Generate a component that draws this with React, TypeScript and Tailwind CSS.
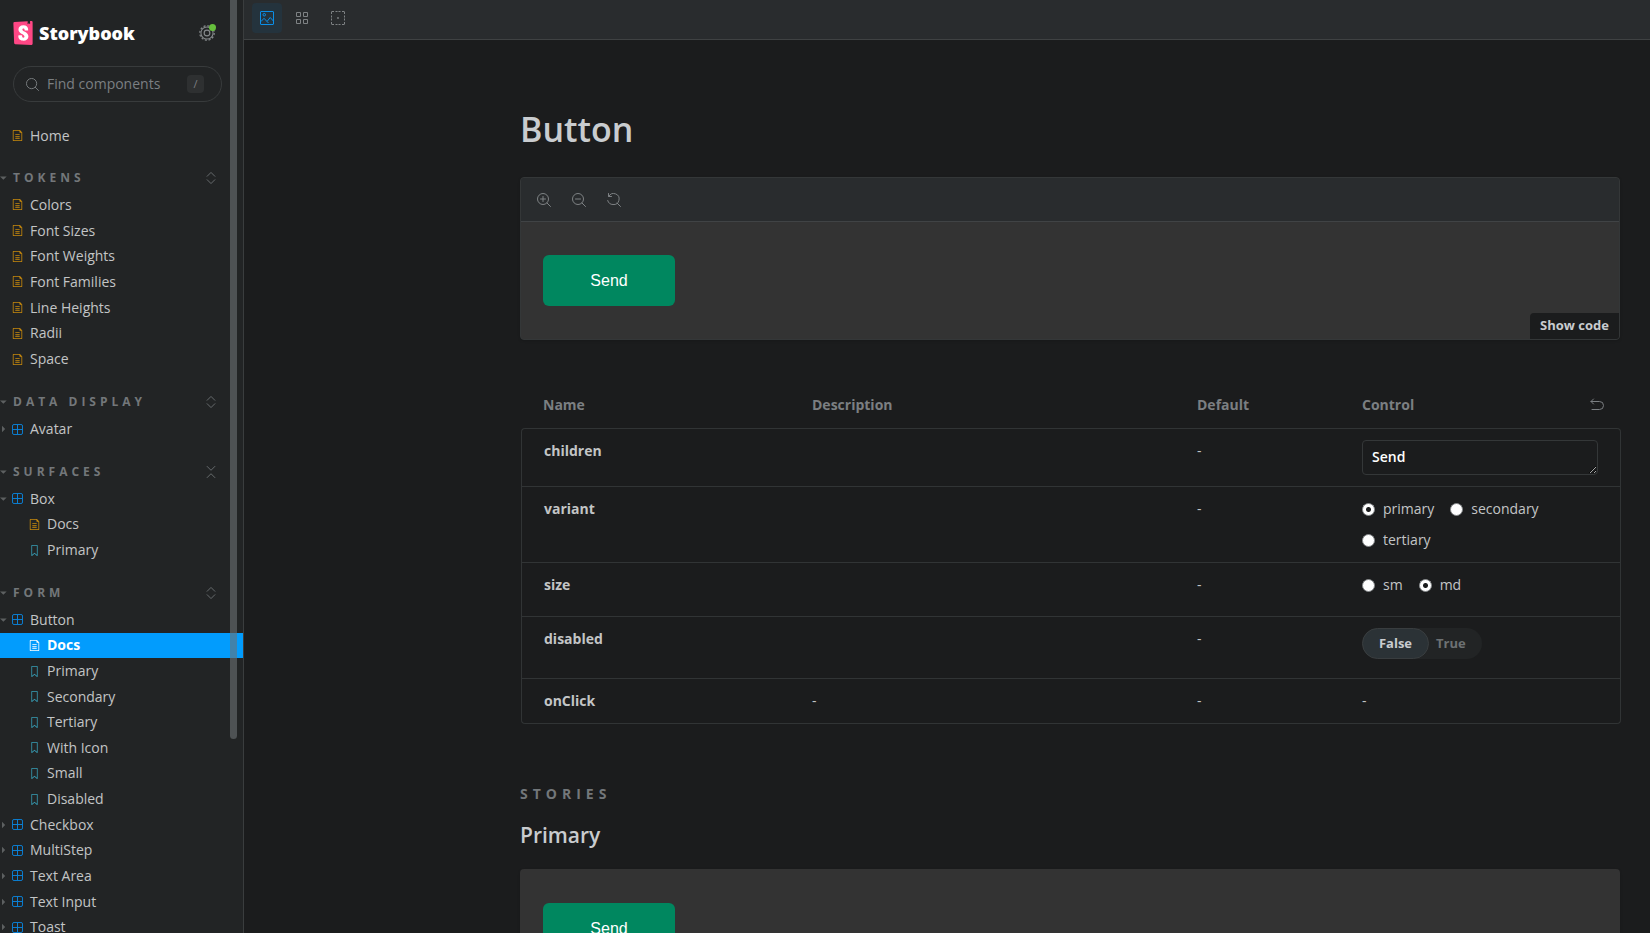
import type { ReactNode } from "react";
import { SiStorybook } from "react-icons/si";

type IconProps = { className?: string; children?: ReactNode };

function Icon({ className, children }: IconProps) {
  return (
    <svg viewBox="0 0 14 14" fill="none" stroke="currentColor" aria-hidden="true" className={`shrink-0 ${className ?? "size-3.5"}`}>
      {children}
    </svg>
  );
}

const DocIcon = ({ className }: IconProps) => (
  <Icon className={className}>
    <g fill="currentColor" stroke="none">
      <path d="M4 5.5a.5.5 0 01.5-.5h5a.5.5 0 010 1h-5a.5.5 0 01-.5-.5zM4.5 7.5a.5.5 0 000 1h5a.5.5 0 000-1h-5zM4 10.5a.5.5 0 01.5-.5h5a.5.5 0 010 1h-5a.5.5 0 01-.5-.5z" />
      <path fillRule="evenodd" d="M1.5 0a.5.5 0 00-.5.5v13a.5.5 0 00.5.5h11a.5.5 0 00.5-.5V3.207a.5.5 0 00-.146-.353L10.146.146A.5.5 0 009.793 0H1.5zM2 1h7.5v2a.5.5 0 00.5.5h2V13H2V1z" />
    </g>
  </Icon>
);

const ComponentIcon = ({ className }: IconProps) => (
  <Icon className={className}>
    <rect x="0.6" y="0.6" width="12.8" height="12.8" rx="2" strokeWidth="1.2" />
    <path d="M7 1v12M1 7h12" strokeWidth="1.2" />
  </Icon>
);

const StoryIcon = ({ className }: IconProps) => (
  <Icon className={className}>
    <path
      fill="currentColor"
      stroke="none"
      fillRule="evenodd"
      d="M3.5 0h7a.5.5 0 01.5.5v13a.5.5 0 01-.454.498.462.462 0 01-.371-.118L7 11.159l-3.175 2.72a.46.46 0 01-.379.118A.5.5 0 013 13.5V.5a.5.5 0 01.5-.5zM4 12.413l2.664-2.284a.454.454 0 01.377-.128.498.498 0 01.284.12L10 12.412V1H4v11.413z"
    />
  </Icon>
);

const PhotoIcon = () => (
  <Icon>
    <rect x="0.5" y="0.5" width="13" height="13" rx="0.5" />
    <circle cx="4.25" cy="3.75" r="1.25" />
    <path d="M1 10.5L4 7.3l3 3.2 3.2-4L13.4 10M7 10.5l1.5 1.5" />
  </Icon>
);

const GridIcon = () => (
  <Icon>
    <path d="M1.5 1.5h4v4h-4zM8.5 1.5h4v4h-4zM1.5 8.5h4v4h-4zM8.5 8.5h4v4h-4z" strokeLinejoin="round" />
  </Icon>
);

const OutlineIcon = () => (
  <Icon>
    <path d="M.5 3V1a.5.5 0 01.5-.5h2M4.500 .5h2M7.500 .5h2M11 .5h2a.5.5 0 01.5.5v2M13.5 4.500v2M13.5 7.500v2M13.5 11v2a.5.5 0 01-.5.5h-2M9.500 13.500h-2M6.500 13.500h-2M3 13.500H1a.5.5 0 01-.5-.5v-2M.5 9.500v-2M.5 6.500v-2" />
    <circle cx="7" cy="7" r="0.9" fill="currentColor" stroke="none" />
  </Icon>
);

const GearIcon = () => (
  <Icon className="size-4">
    <circle cx="7" cy="7" r="6.3" strokeWidth="1.1" strokeDasharray="1.8 1.5" />
    <circle cx="7" cy="7" r="5.3" strokeWidth="0.9" />
    <circle cx="7" cy="7" r="2.5" strokeWidth="1" />
  </Icon>
);

const ZoomIcon = ({ kind, className }: { kind: "in" | "out" | "reset" | "search"; className?: string }) => (
  <Icon className={className}>
    {kind === "reset" ? (
      <path d="M1.500 .500v3h3M1.700 3.500A5.500 5.500 0 116 11.500 5.500 5.500 0 01.700 7.500" strokeLinecap="round" strokeLinejoin="round" />
    ) : (
      <circle cx="6" cy="6" r="5.5" />
    )}
    <path d="M10 10l3.500 3.500" strokeLinecap="round" />
    {(kind === "in" || kind === "out") && <path d="M3.500 6h5" strokeLinecap="round" />}
    {kind === "in" && <path d="M6 3.500v5" strokeLinecap="round" />}
  </Icon>
);

const UndoIcon = () => (
  <Icon>
    <path d="M3.500 1L1 3.500 3.500 6M1 3.500h8.500a4 4 0 010 8H2" strokeLinecap="round" strokeLinejoin="round" />
  </Icon>
);

const ExpandIcon = ({ collapse }: { collapse?: boolean }) => (
  <Icon className="size-3">
    <path d={collapse ? "M2.500 .500L7 5l4.500-4.500M2.500 13.500L7 9l4.500 4.500" : "M2.500 5L7 .500 11.500 5M2.500 9L7 13.500 11.500 9"} strokeLinecap="round" />
  </Icon>
);

const Caret = ({ open }: { open?: boolean }) => (
  <svg viewBox="0 0 8 8" aria-hidden="true" className="size-2 shrink-0 fill-[#5d6061]">
    <path d={open ? "M0 2.500h6.700L3.350 5.800z" : "M2 .800v6.400l3.200-3.200z"} />
  </svg>
);

type Node = { label: string; kind: "doc" | "component" | "story"; depth?: number; open?: boolean; selected?: boolean };

const iconColor = { doc: "text-[#c98a0c]", component: "text-[#0b84dc]", story: "text-[#37a0b8]" };

function TreeItem({ label, kind, depth = 0, open, selected }: Node) {
  const size = "size-[11px]";
  const color = selected ? "text-white" : iconColor[kind];
  return (
    <li className="flex">
      <a
        href="#"
        className={`flex flex-1 items-center gap-[7px] leading-5 ${depth ? "pl-[29px]" : ""} ${selected ? "bg-[#029cfd] font-bold text-white" : "text-[#c3c5c6]"}`}
      >
        <span className="flex items-center">
          {!depth && <span className="flex w-3">{kind === "component" && <Caret open={open} />}</span>}
          {kind === "doc" && <DocIcon className={`${size} ${color}`} />}
          {kind === "component" && <ComponentIcon className={`${size} ${color}`} />}
          {kind === "story" && <StoryIcon className={`${size} ${color}`} />}
        </span>
        {label}
      </a>
    </li>
  );
}

function Section({ title, collapse, height, items }: { title: string; collapse?: boolean; height: string; items: Node[] }) {
  return (
    <section>
      <div className="mt-4 mb-px flex h-[27px] items-center justify-between pr-[26px] text-[#73777a]">
        <h2>
          <button className="flex items-center gap-[5px] text-xs font-bold tracking-[4px] uppercase">
            <Caret open />
            {title}
          </button>
        </h2>
        <button aria-label={`Toggle all in ${title}`}>
          <ExpandIcon collapse={collapse} />
        </button>
      </div>
      <ul className={`grid auto-rows-fr ${height}`}>
        {items.map((item) => (
          <TreeItem key={item.label} {...item} />
        ))}
      </ul>
    </section>
  );
}

const docs = (labels: string[]): Node[] => labels.map((label) => ({ label, kind: "doc" }));
const components = (labels: string[]): Node[] => labels.map((label) => ({ label, kind: "component" }));
const stories = (labels: string[]): Node[] => labels.map((label) => ({ label, kind: "story", depth: 1 }));

function Sidebar() {
  return (
    <aside className="relative h-full w-61 shrink-0 overflow-hidden border-r border-[#3a3d3e] bg-[#222425] text-sm">
      <header className="flex items-center justify-between pt-[19px] pr-7 pl-[11px]">
        <a href="#" className="flex items-center gap-1 text-lg leading-7 font-extrabold text-white">
          <span className="flex bg-[linear-gradient(#fff,#fff)] bg-size-[12px_16px] bg-center bg-no-repeat">
            <SiStorybook className="size-6 text-[#ff4785]" />
          </span>
          Storybook
        </a>
        <button aria-label="Settings" className="relative text-[#85898b]">
          <GearIcon />
          <span className="absolute -top-px -right-px size-[7px] rounded-full bg-[#66bf3c]" />
        </button>
      </header>
      <label className="mt-[19px] mr-[21px] ml-[13px] flex h-9 items-center gap-2 rounded-full border border-[#383b3c] pr-[17px] pl-3 text-[#7b7f82]">
        <ZoomIcon kind="search" className="size-[13px]" />
        <input placeholder="Find components" aria-label="Find components" className="w-full min-w-0 bg-transparent outline-none placeholder:text-[#7b7f82]" />
        <kbd className="flex h-[18px] w-[17px] shrink-0 items-center justify-center rounded-sm bg-[#2e3031] font-[inherit] text-[11px]">/</kbd>
      </label>
      <nav className="mt-[21px]">
        <ul className="grid h-[25px] auto-rows-fr">
          <TreeItem label="Home" kind="doc" />
        </ul>
        <Section title="Tokens" height="h-[180px]" items={docs(["Colors", "Font Sizes", "Font Weights", "Font Families", "Line Heights", "Radii", "Space"])} />
        <Section title="Data display" height="h-[26px]" items={components(["Avatar"])} />
        <Section
          title="Surfaces"
          collapse
          height="h-[77px]"
          items={[{ label: "Box", kind: "component", open: true }, { label: "Docs", kind: "doc", depth: 1 }, ...stories(["Primary"])]}
        />
        <Section
          title="Form"
          height="h-[333px]"
          items={[
            { label: "Button", kind: "component", open: true },
            { label: "Docs", kind: "doc", depth: 1, selected: true },
            ...stories(["Primary", "Secondary", "Tertiary", "With Icon", "Small", "Disabled"]),
            ...components(["Checkbox", "MultiStep", "Text Area", "Text Input", "Toast"]),
          ]}
        />
      </nav>
      <div className="absolute top-0 right-1.5 h-[79.2%] w-[7px] rounded-b-full bg-[#6c7174]/60" />
    </aside>
  );
}

function SendButton() {
  return (
    <button className="h-[51px] w-33 rounded-md bg-[#00875f] font-['Liberation_Sans',Arial,sans-serif] text-base text-white">Send</button>
  );
}

function Radios({ name, options, checked }: { name: string; options: string[]; checked: string }) {
  return (
    <fieldset aria-label={name} className="flex flex-wrap gap-x-4 gap-y-[11px]">
      {options.map((option) => (
        <label key={option} className="flex items-center gap-2">
          <input
            type="radio"
            name={name}
            defaultChecked={option === checked}
            className="size-[13px] appearance-none rounded-full border border-[#85888a] bg-white checked:bg-[radial-gradient(circle,#1b1c1d_2px,#fff_3px)]"
          />
          {option}
        </label>
      ))}
    </fieldset>
  );
}

const rows: { name: string; height: string; description?: string; control: ReactNode; padding?: string }[] = [
  {
    name: "children",
    height: "h-[59px]",
    padding: "pt-[11px]",
    control: (
      <textarea
        aria-label="children"
        rows={1}
        defaultValue="Send"
        className="block h-[35px] w-full overflow-hidden rounded border border-[#343738] bg-transparent px-[9px] py-1.5 leading-5 font-semibold text-white"
      />
    ),
  },
  { name: "variant", height: "h-[76px]", control: <Radios name="variant" options={["primary", "secondary", "tertiary"]} checked="primary" /> },
  { name: "size", height: "h-[54px]", control: <Radios name="size" options={["sm", "md"]} checked="md" /> },
  {
    name: "disabled",
    height: "h-[62px]",
    padding: "pt-[11px]",
    control: (
      <button role="switch" aria-checked="false" aria-label="disabled" className="flex h-[31px] items-center rounded-full bg-[#222425] pr-4 text-[13px] leading-5 font-bold text-[#6d7173]">
        <span className="mr-[7px] flex h-full w-[67px] items-center justify-center rounded-full border border-[#393d3f] bg-[#2b3236] pb-0.5 text-[#c9cccf]">False</span>
        <span className="pb-0.5">True</span>
      </button>
    ),
  },
  { name: "onClick", height: "h-[45px]", description: "-", control: "-" },
];

function ArgsTable() {
  const cell = "border-b border-[#313435] pl-4 align-top group-first:border-t";
  return (
    <table className="mt-[55px] -mr-px ml-px w-full table-fixed border-separate border-spacing-0 text-left text-sm leading-5 text-[#c3c5c6]">
      <colgroup>
        <col className="w-[25%]" />
        <col className="w-[35%]" />
        <col className="w-[15%]" />
        <col className="w-[25%]" />
      </colgroup>
      <thead className="text-[#7b7f82]">
        <tr className="h-[33px] align-top">
          <th className="pl-[22px] font-bold">Name</th>
          <th className="pl-4 font-bold">Description</th>
          <th className="pl-4 font-bold">Default</th>
          <th className="pr-[17px] pl-4 font-bold">
            <span className="flex items-center justify-between">
              Control
              <button aria-label="Reset controls">
                <UndoIcon />
              </button>
            </span>
          </th>
        </tr>
      </thead>
      <tbody>
        {rows.map((row) => (
          <tr key={row.name} className={`group ${row.height}`}>
            <td className="border-b border-l border-[#313435] pt-3 pl-[22px] align-top font-bold group-first:rounded-tl group-first:border-t group-last:rounded-bl">
              {row.name}
            </td>
            <td className={`pt-3 ${cell}`}>{row.description}</td>
            <td className={`pt-3 ${cell}`}>-</td>
            <td className={`border-r pr-[22px] group-first:rounded-tr group-last:rounded-br ${row.padding ?? "pt-3"} ${cell}`}>{row.control}</td>
          </tr>
        ))}
      </tbody>
    </table>
  );
}

export default function App() {
  return (
    <div className="flex h-screen overflow-hidden bg-[#1b1c1d] font-['Open_Sans','Noto_Sans',sans-serif]">
      <Sidebar />
      <div className="flex min-w-0 flex-1 flex-col">
        <div role="toolbar" className="flex h-10 shrink-0 items-center gap-1.5 border-b border-[#3f4243] bg-[#292c2e] px-2 pb-[3px] text-[#7e8284]">
          <button aria-label="Change background" className="grid h-[30px] w-[30px] place-items-center rounded bg-[#24333d] text-[#0b8fe8]">
            <PhotoIcon />
          </button>
          <button aria-label="Apply grid" className="grid h-7 w-7 place-items-center">
            <GridIcon />
          </button>
          <button aria-label="Apply outlines" className="grid h-7 w-8 place-items-center">
            <OutlineIcon />
          </button>
        </div>
        <main className="min-h-0 flex-1 overflow-hidden pr-[30px] pl-10">
          <div className="ml-auto w-full max-w-[1100px]">
            <h1 className="pt-[69px] text-[34px] leading-10 font-semibold text-[#c9cccf]">Button</h1>
            <div className="mt-7 overflow-hidden rounded border border-[#343738] bg-[#333] shadow">
              <div className="flex h-11 items-center gap-[21px] border-b border-[#404345] bg-[#292c2e] px-4 text-[#7e8284]">
                <button aria-label="Zoom in">
                  <ZoomIcon kind="in" />
                </button>
                <button aria-label="Zoom out">
                  <ZoomIcon kind="out" />
                </button>
                <button aria-label="Reset zoom">
                  <ZoomIcon kind="reset" />
                </button>
              </div>
              <div className="relative px-[22px] py-[33px]">
                <SendButton />
                <button className="absolute right-0 bottom-0 h-[26px] rounded-tl bg-[#1b1c1d] px-[10px] pb-[3px] text-[13px] leading-5 font-bold text-[#c9cccf]">Show code</button>
              </div>
            </div>
            <ArgsTable />
            <h2 className="mt-[60px] text-sm leading-5 font-bold tracking-[5px] text-[#73777a] uppercase">Stories</h2>
            <h3 className="mt-[17px] text-[21px] leading-7 font-semibold text-[#c9cccf]">Primary</h3>
            <div className="mt-5 rounded bg-[#333] px-[23px] py-[34px] shadow">
              <SendButton />
            </div>
          </div>
        </main>
      </div>
    </div>
  );
}
